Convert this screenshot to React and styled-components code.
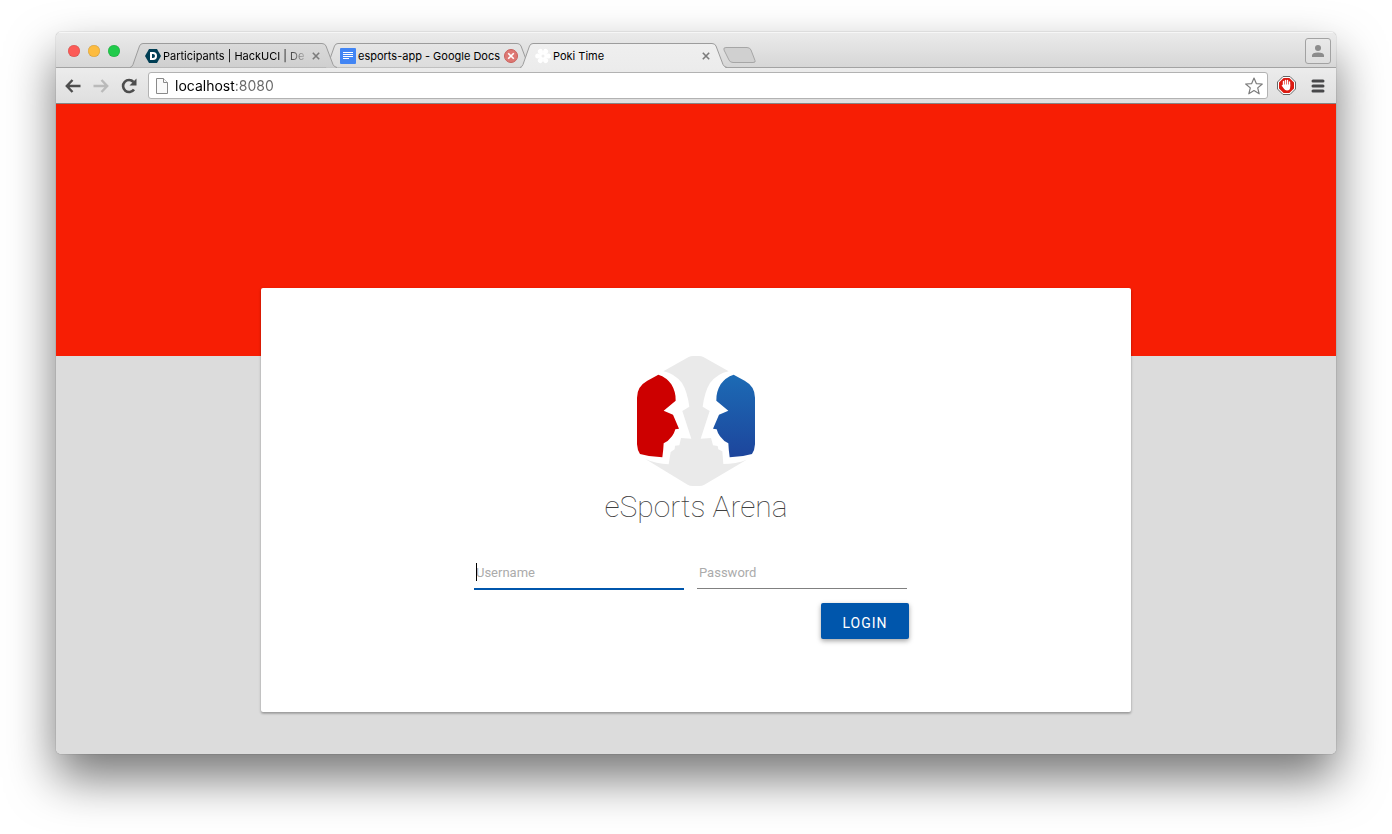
import React, { useState } from 'react';
import styled, { createGlobalStyle } from 'styled-components';

const GlobalStyle = createGlobalStyle`
  * {
    box-sizing: border-box;
  }

  body {
    margin: 0;
    background: #fff;
    font-family: Roboto, sans-serif;
  }

  button,
  input {
    font: inherit;
    border: 0;
    padding: 0;
    margin: 0;
    background: none;
    outline: none;
  }
`;

/* Browser window */
const Desktop = styled.div`
  display: flex;
  min-height: 100vh;
  padding: 32px 56px 80px;
`;

const Window = styled.div`
  flex: 1;
  display: flex;
  flex-direction: column;
  min-width: 0;
  border-radius: 5px;
  overflow: hidden;
  box-shadow: 0 0 1px rgba(0, 0, 0, 0.6), 0 24px 48px rgba(0, 0, 0, 0.54);
`;

const TitleBar = styled.div`
  display: flex;
  align-items: flex-end;
  height: 36px;
  padding: 0 5px 0 12px;
  background: linear-gradient(#ebebeb, #d6d6d6);
  box-shadow: inset 0 1px #f6f6f6, inset 0 -1px #a3a3a3;
`;

const Lights = styled.div`
  display: flex;
  gap: 8px;
  width: 62px;
  padding-bottom: 11px;
`;

const Light = styled.button`
  width: 12px;
  height: 12px;
  border-radius: 50%;
  background: ${(props) => props.$color};
  box-shadow: inset 0 0 1px rgba(0, 0, 0, 0.4);
`;

const TabStrip = styled.div`
  display: flex;
  align-items: flex-end;
`;

const TabBox = styled.div`
  position: relative;
  z-index: ${(props) => props.$layer};
  display: flex;
  align-items: center;
  width: 207px;
  height: 25px;
  padding: 0 14px 0 15px;
  margin-right: -12px;
`;

const TabShape = styled.svg`
  position: absolute;
  inset: 0;
  z-index: -1;
`;

const TabLabel = styled.button`
  flex: 1;
  display: flex;
  align-items: center;
  gap: 2px;
  min-width: 0;
`;

const TabTitle = styled.span`
  flex: 1;
  overflow: hidden;
  white-space: nowrap;
  text-align: left;
  font-family: Inter, sans-serif;
  font-size: 11px;
  line-height: 16px;
  color: #000;
  mask-image: ${(props) => (props.$fade ? 'linear-gradient(90deg, #000 118px, transparent 148px)' : 'none')};
`;

const CloseButton = styled.button`
  display: flex;
  width: 14px;
  height: 14px;
`;

const NewTab = styled.button`
  display: flex;
  margin: 0 0 4px 8px;
`;

const ProfileButton = styled.button`
  display: flex;
  align-items: center;
  justify-content: center;
  width: 26px;
  height: 26px;
  margin: 0 0 4px auto;
  border: 1px solid #a2a2a2;
  border-radius: 3px;
  background: linear-gradient(#e9e9e9, #dedede);
`;

const Toolbar = styled.div`
  display: flex;
  align-items: center;
  gap: 8px;
  height: 36px;
  padding: 0 8px 0 7px;
  background: linear-gradient(#ececec, #dfdfdf);
  border-bottom: 1px solid #858585;
`;

const ToolButton = styled.button`
  display: flex;
  align-items: center;
  justify-content: center;
  width: 20px;
  height: 20px;
`;

const AddressBar = styled.div`
  flex: 1;
  display: flex;
  align-items: center;
  height: 27px;
  margin-left: 1px;
  padding: 0 3px 0 6px;
  background: #fff;
  border: 1px solid #b2b2b2;
  border-radius: 3px;
`;

/* The host is dark and the port is grey */
const AddressInput = styled.input`
  flex: 1;
  min-width: 0;
  height: 22px;
  margin-left: 6px;
  font-family: Inter, sans-serif;
  font-size: 14px;
  color: #111;
  background: linear-gradient(90deg, #000 59px, #666 59px);
  background-clip: text;
  -webkit-text-fill-color: transparent;
`;

const Extensions = styled.div`
  display: flex;
  gap: 12px;
`;

/* Login page */
const Page = styled.main`
  flex: 1;
  display: flex;
  align-items: stretch;
  justify-content: center;
  padding: 184px 0 42px;
  background: linear-gradient(#f71e04 252px, #dcdcdc 252px);
`;

const Card = styled.section`
  display: flex;
  flex-direction: column;
  align-items: center;
  width: 68%;
  padding: 68px 24px 72px;
  background: #fff;
  border-radius: 2px;
  box-shadow: 0 1px 3px rgba(0, 0, 0, 0.24), 0 2px 2px rgba(0, 0, 0, 0.14);
`;

const Title = styled.h1`
  margin: 0;
  font-size: 30px;
  font-weight: 100;
  line-height: 42px;
  color: #404040;
`;

const Form = styled.form`
  display: flex;
  flex-direction: column;
  width: 444px;
  max-width: 100%;
  margin-top: 28px;
`;

const Fields = styled.div`
  display: flex;
  align-items: flex-start;
  gap: 13px;
  height: 34px;
`;

const Field = styled.label`
  position: relative;
  width: 210px;
`;

const TextInput = styled.input`
  display: block;
  box-sizing: content-box;
  width: 100%;
  height: 32px;
  font-size: 13px;
  text-indent: 2px;
  color: #222;
  caret-color: transparent;
  border-bottom: ${(props) => (props.$active ? '2px solid #0056ac' : '1px solid #808080')};

  &::placeholder {
    color: #ababab;
    opacity: 1;
  }
`;

const Caret = styled.span`
  position: absolute;
  left: 2px;
  top: 7px;
  width: 1px;
  height: 18px;
  background: #000;
`;

const LoginButton = styled.button`
  align-self: flex-end;
  width: 88px;
  height: 36px;
  margin: 13px 9px 0 0;
  padding-top: 4px;
  border-radius: 2px;
  background: #0056ac;
  color: #fff;
  font-size: 14px;
  font-weight: 400;
  letter-spacing: 1px;
  box-shadow: 0 2px 5px rgba(0, 0, 0, 0.36);
`;

const shades = {
  dim: ['#dadada', '#cfcfcf'],
  light: ['#e6e6e6', '#dcdcdc'],
  active: ['#efefef', '#ececec'],
};

const Tab = ({ id, title, icon, shade, layer, fade, busy }) => (
  <TabBox $layer={layer}>
    <TabShape width="207" height="25" viewBox="0 0 207 25">
      <defs>
        <linearGradient id={id} x1="0" y1="0" x2="0" y2="1">
          <stop offset="0" stopColor={shades[shade][0]} />
          <stop offset="1" stopColor={shades[shade][1]} />
        </linearGradient>
      </defs>
      <path
        d="M0 24.5Q2 24 3 21.5L9.500 3Q10.500.5 13 .5H192Q195 .5 196 3L203 21.500Q204 24 207 24.500"
        fill={`url(#${id})`}
        stroke="#9c9c9c"
      />
      {shade === 'active' && <path d="M2 24.500H205" stroke="#ececec" />}
    </TabShape>
    <TabLabel>
      {icon}
      <TabTitle $fade={fade}>{title}</TabTitle>
    </TabLabel>
    <CloseButton aria-label="Close tab">
      <svg width="14" height="14" viewBox="0 0 14 14">
        {busy && <circle cx="7" cy="7" r="6.500" fill="#de7873" stroke="#c9605c" />}
        <path
          d={busy ? 'M4.200 4.200L9.800 9.800M9.800 4.200L4.200 9.800' : 'M3.800 3.800L10.200 10.200M10.200 3.800L3.800 10.200'}
          stroke={busy ? '#fff' : '#7b7b7b'}
          strokeWidth="1.600"
        />
      </svg>
    </CloseButton>
  </TabBox>
);

const DevpostIcon = () => (
  <svg width="16" height="16" viewBox="0 0 16 16">
    <path d="M4 1H12L16 8L12 15H4L0 8Z" fill="#003e54" />
    <path d="M6 5H8Q11 5 11 8T8 11H6Z" fill="none" stroke="#fff" strokeWidth="2" />
  </svg>
);

const DocsIcon = () => (
  <svg width="16" height="16" viewBox="0 0 16 16">
    <rect width="16" height="16" rx="1" fill="#4285f4" />
    <path d="M3 4.500H13M3 6.500H13M3 8.500H13M3 10.500H9" stroke="#fff" />
  </svg>
);

const FlowerIcon = () => (
  <svg width="16" height="16" viewBox="0 0 16 16" fill="#fff">
    {[0, 60, 120, 180, 240, 300].map((angle) => (
      <circle key={angle} cx="8" cy="2.700" r="2.500" transform={`rotate(${angle + 30} 8 8)`} />
    ))}
    <path d="M8 4L11.500 6V10L8 12L4.500 10V6ZM8 6.500A1.500 1.500 0 1 0 8 9.500A1.500 1.500 0 1 0 8 6.500Z" fillRule="evenodd" />
  </svg>
);

const face =
  'M205 89L172 107Q141 124 141 158V298Q142 316 150 327Q183 337 217 337Q220 316 221 295Q235 289 246 274Q254 262 256 253L267 251L249 209L221 197L257 167Q258 141 244 118Q230 97 205 89Z';

const ArenaLogo = () => (
  <svg width="118" height="130" viewBox="141 33 354 390" role="img" aria-label="eSports Arena logo">
    <defs>
      <linearGradient id="blueFace" x1="0" y1="0" x2="0" y2="1">
        <stop offset="0" stopColor="#1c6bb5" />
        <stop offset="1" stopColor="#1d459c" />
      </linearGradient>
    </defs>
    <path
      fill="#eaeaea"
      d="M220 79L296 36Q302 33 309 33H327Q334 33 340 36L416 79Q382 86 360 114Q344 140 338 185L359 198L332 281L363 279L369 301L383 303L385 313L397 319L400 357Q437 357 470 344L343 419Q337 423 327 423H309Q299 423 293 419L166 342Q199 357 236 358L242 321L254 313L255 302L268 301L273 279L304 281L277 198L298 185Q292 140 276 114Q254 86 220 79Z"
    />
    <path d={face} fill="#cd0000" />
    <path d={face} fill="url(#blueFace)" transform="matrix(-1 0 0 1 636 0)" />
  </svg>
);

const App = () => {
  const [username, setUsername] = useState('');
  const [password, setPassword] = useState('');

  return (
    <Desktop>
      <GlobalStyle />
      <Window>
        <TitleBar>
          <Lights>
            <Light $color="#fc5b57" aria-label="Close" />
            <Light $color="#fdbc40" aria-label="Minimize" />
            <Light $color="#21cb4b" aria-label="Zoom" />
          </Lights>
          <TabStrip>
            <Tab id="tabOne" title="Participants | HackUCI | De" icon={<DevpostIcon />} shade="dim" layer={2} fade />
            <Tab id="tabTwo" title="esports-app - Google Docs" icon={<DocsIcon />} shade="light" layer={1} busy />
            <Tab id="tabThree" title="Poki Time" icon={<FlowerIcon />} shade="active" layer={3} />
            <NewTab aria-label="New tab">
              <svg width="33" height="17" viewBox="0 0 33 17">
                <path
                  d="M3 .5H24Q27 .5 28 3L32 13.500Q33 15.500 30 15.500H10Q7 15.500 6 13L1 3Q0 .5 3 .5Z"
                  fill="#d0d0d0"
                  stroke="#a6a6a6"
                />
              </svg>
            </NewTab>
          </TabStrip>
          <ProfileButton aria-label="Profile">
            <svg width="14" height="14" viewBox="0 0 14 14" fill="#8c8c8c">
              <circle cx="7" cy="4" r="3" />
              <path d="M1 13V11.500Q1 8.500 7 8.500T13 11.500V13Z" />
            </svg>
          </ProfileButton>
        </TitleBar>

        <Toolbar>
          <ToolButton aria-label="Back">
            <svg width="16" height="14" viewBox="0 0 16 14" fill="none" stroke="#4d4d4d" strokeWidth="2.400">
              <path d="M7.500 1L1.800 7L7.500 13M2 7H15.500" />
            </svg>
          </ToolButton>
          <ToolButton aria-label="Forward">
            <svg width="16" height="14" viewBox="0 0 16 14" fill="none" stroke="#bababa" strokeWidth="2.400">
              <path d="M8.500 1L14.200 7L8.500 13M14 7H.5" />
            </svg>
          </ToolButton>
          <ToolButton aria-label="Reload">
            <svg width="16" height="16" viewBox="0 0 16 16">
              <path d="M13 11.500A6 6 0 1 1 12.500 4" fill="none" stroke="#4d4d4d" strokeWidth="2.600" />
              <path d="M15.500 .5V7.500H8.500Z" fill="#4d4d4d" />
            </svg>
          </ToolButton>
          <AddressBar>
            <svg width="14" height="16" viewBox="0 0 14 16" fill="#fafafa" stroke="#8a8a8a">
              <path d="M1.500 .5H8.500L12.500 4.500V15.500H1.500Z" />
              <path d="M8.500 .5V4.500H12.500" />
            </svg>
            <AddressInput aria-label="Address" defaultValue="localhost:8080" />
            <ToolButton aria-label="Bookmark this page">
              <svg width="18" height="18" viewBox="0 0 18 18">
                <path
                  d="M9 1L11.300 6.600L17.300 7L12.700 10.900L14.200 16.800L9 13.600L3.800 16.800L5.300 10.900L.7 7L6.700 6.600Z"
                  fill="#fff"
                  stroke="#7d7d7d"
                  strokeWidth="1.200"
                  strokeLinejoin="round"
                />
              </svg>
            </ToolButton>
          </AddressBar>
          <Extensions>
            <ToolButton aria-label="AdBlock">
              <svg width="19" height="19" viewBox="0 0 19 19">
                <path d="M6 .5H13L18.500 6V13L13 18.500H6L.5 13V6Z" fill="#fff" stroke="#666" />
                <path d="M6.600 2H12.400L17 6.600V12.400L12.400 17H6.600L2 12.400V6.600Z" fill="#dc1b12" />
                <path
                  d="M6.500 5.500V9.500M8.500 4.500V9M10.500 4.500V9M12.500 6V10"
                  stroke="#fff"
                  strokeWidth="1.400"
                  strokeLinecap="round"
                />
                <path d="M5.800 8.500H13.200V11Q13.200 14.500 10 14.500Q8 14.500 6.800 12.500L4.600 9.600Q5 8.700 5.800 9.200Z" fill="#fff" />
              </svg>
            </ToolButton>
            <ToolButton aria-label="Menu">
              <svg width="14" height="14" viewBox="0 0 14 14" stroke="#48484a" strokeWidth="3" strokeLinecap="round">
                <path d="M2 2H12M2 7H12M2 12H12" />
              </svg>
            </ToolButton>
          </Extensions>
        </Toolbar>

        <Page>
          <Card>
            <ArenaLogo />
            <Title>eSports Arena</Title>
            <Form onSubmit={(e) => e.preventDefault()}>
              <Fields>
                <Field>
                  <TextInput
                    $active
                    type="text"
                    aria-label="Username"
                    placeholder="Username"
                    value={username}
                    onChange={(e) => setUsername(e.target.value)}
                  />
                  <Caret />
                </Field>
                <Field>
                  <TextInput
                    type="password"
                    aria-label="Password"
                    placeholder="Password"
                    value={password}
                    onChange={(e) => setPassword(e.target.value)}
                  />
                </Field>
              </Fields>
              <LoginButton type="submit">LOGIN</LoginButton>
            </Form>
          </Card>
        </Page>
      </Window>
    </Desktop>
  );
};

export default App;
